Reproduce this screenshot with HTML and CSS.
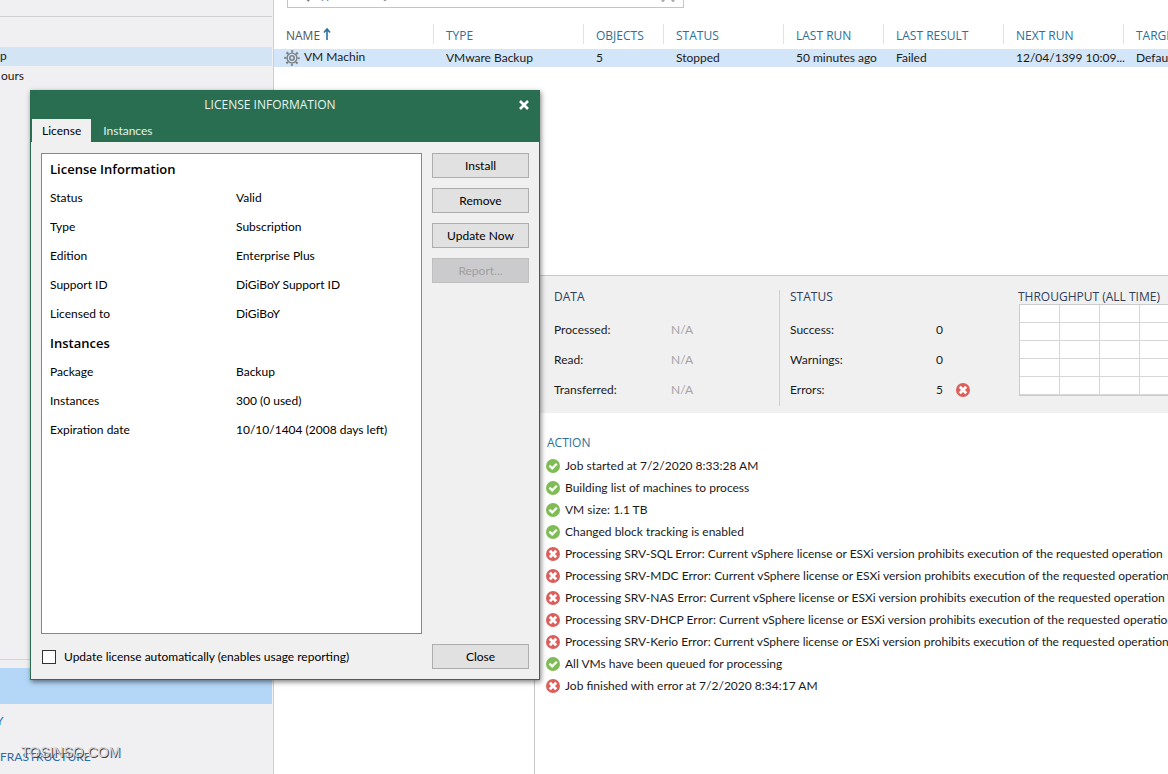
FILE: index.html
```html
<!DOCTYPE html>
<html lang="en">
<head>
    <meta charset="UTF-8">
    <title>License Information</title>
    <link rel="stylesheet" href="styles.css">
</head>
<body>
    <svg class="sprite" aria-hidden="true">
        <symbol id="ok" viewBox="0 0 14 14">
            <circle cx="7" cy="7" r="7" fill="#7fbc55"/>
            <path d="M3.4 6.6 L6.2 9.4 L10.8 4.8" fill="none" stroke="#fff" stroke-width="2.2"/>
        </symbol>
        <symbol id="error" viewBox="0 0 14 14">
            <circle cx="7" cy="7" r="7" fill="#dc5f5c"/>
            <path d="M3.8 3.8 L10.2 10.2 M10.2 3.8 L3.8 10.2" fill="none" stroke="#fff" stroke-width="2.8"/>
        </symbol>
    </svg>

    <div class="app">
        <nav class="sidebar">
            <div class="sidebar-head"></div>
            <ul class="tree">
                <li class="selected"><a href="#">p</a></li>
                <li><a href="#">ours</a></li>
            </ul>
            <ul class="views">
                <li class="selected"><a href="#" aria-label="Home"></a></li>
                <li class="clipped"><a href="#">Y</a></li>
                <li><a href="#">FRASTRUCTURE</a></li>
            </ul>
            <div class="watermark">TOSINSO.COM</div>
        </nav>

        <main class="main">
            <section class="jobs">
                <div class="toolbar">
                    <div class="search">
                        <svg class="search-icon" viewBox="0 0 14 14"><circle cx="5" cy="5" r="4" fill="none" stroke="#777" stroke-width="1.5"/><path d="M8 8 L13 13" stroke="#777" stroke-width="2"/></svg>
                        <input type="text" aria-label="Search" placeholder="Type in an object name to search for">
                        <svg class="search-clear" viewBox="0 0 18 14"><path d="M1 9 L4 13 L7 9 M11 9 L14 13 L17 9" fill="none" stroke="#aaa" stroke-width="2"/></svg>
                    </div>
                </div>
                <table class="job-table">
                    <colgroup>
                        <col class="w-name"><col class="w-type"><col class="w-objects"><col class="w-status"><col class="w-run"><col class="w-result"><col class="w-next"><col class="w-target">
                    </colgroup>
                    <thead>
                        <tr>
                            <th class="sorted">NAME<svg class="sort" viewBox="0 0 8 12"><path d="M4 12 V1 M1 4.5 L4 1 L7 4.5" fill="none" stroke="#2a6f9e" stroke-width="1.6"/></svg></th>
                            <th>TYPE</th>
                            <th>OBJECTS</th>
                            <th>STATUS</th>
                            <th>LAST RUN</th>
                            <th>LAST RESULT</th>
                            <th>NEXT RUN</th>
                            <th>TARGET</th>
                        </tr>
                    </thead>
                    <tbody>
                        <tr>
                            <td class="job-name"><svg class="gear" viewBox="0 0 16 16"><g fill="none" stroke="#7c8287"><circle cx="8" cy="8" r="4.9" stroke-width="1.4"/><circle cx="8" cy="8" r="2.2" stroke-width="1.6"/><circle cx="8" cy="8" r="6.6" stroke-width="2.4" stroke-dasharray="2 3.184" stroke-dashoffset="1"/></g></svg>VM Machin</td>
                            <td>VMware Backup</td>
                            <td>5</td>
                            <td>Stopped</td>
                            <td>50 minutes ago</td>
                            <td>Failed</td>
                            <td>12/04/1399 10:09...</td>
                            <td>Default</td>
                        </tr>
                    </tbody>
                </table>
            </section>

            <section class="details">
                <div class="machines"></div>
                <div class="session">
                    <div class="stats">
                        <div class="stat data">
                            <h3>DATA</h3>
                            <dl>
                                <dt>Processed:</dt><dd>N/A</dd>
                                <dt>Read:</dt><dd>N/A</dd>
                                <dt>Transferred:</dt><dd>N/A</dd>
                            </dl>
                        </div>
                        <div class="stat status">
                            <h3>STATUS</h3>
                            <dl>
                                <dt>Success:</dt><dd>0</dd>
                                <dt>Warnings:</dt><dd>0</dd>
                                <dt>Errors:</dt><dd>5<svg class="icon"><use href="#error"/></svg></dd>
                            </dl>
                        </div>
                        <div class="throughput">
                            <h3>THROUGHPUT (ALL TIME)</h3>
                            <div class="chart"></div>
                        </div>
                    </div>
                    <div class="actions">
                        <h3>ACTION</h3>
                        <ul>
                            <li><svg class="icon"><use href="#ok"/></svg>Job started at 7/2/2020 8:33:28 AM</li>
                            <li><svg class="icon"><use href="#ok"/></svg>Building list of machines to process</li>
                            <li><svg class="icon"><use href="#ok"/></svg>VM size: 1.1 TB</li>
                            <li><svg class="icon"><use href="#ok"/></svg>Changed block tracking is enabled</li>
                            <li><svg class="icon"><use href="#error"/></svg>Processing SRV-SQL Error: Current vSphere license or ESXi version prohibits execution of the requested operation</li>
                            <li><svg class="icon"><use href="#error"/></svg>Processing SRV-MDC Error: Current vSphere license or ESXi version prohibits execution of the requested operation</li>
                            <li><svg class="icon"><use href="#error"/></svg>Processing SRV-NAS Error: Current vSphere license or ESXi version prohibits execution of the requested operation</li>
                            <li><svg class="icon"><use href="#error"/></svg>Processing SRV-DHCP Error: Current vSphere license or ESXi version prohibits execution of the requested operation</li>
                            <li><svg class="icon"><use href="#error"/></svg>Processing SRV-Kerio Error: Current vSphere license or ESXi version prohibits execution of the requested operation</li>
                            <li><svg class="icon"><use href="#ok"/></svg>All VMs have been queued for processing</li>
                            <li><svg class="icon"><use href="#error"/></svg>Job finished with error at 7/2/2020 8:34:17 AM</li>
                        </ul>
                    </div>
                </div>
            </section>
        </main>
    </div>

    <div class="dialog" role="dialog" aria-labelledby="dialog-title">
        <header class="dialog-header">
            <h1 id="dialog-title">LICENSE INFORMATION</h1>
            <button class="close" aria-label="Close window"><svg viewBox="0 0 10 10"><path d="M1 1 L9 9 M9 1 L1 9" stroke="#fff" stroke-width="2.6"/></svg></button>
            <div class="tabs">
                <button class="tab active">License</button>
                <button class="tab">Instances</button>
            </div>
        </header>
        <div class="dialog-body">
            <div class="info">
                <h2>License Information</h2>
                <dl>
                    <dt>Status</dt><dd>Valid</dd>
                    <dt>Type</dt><dd>Subscription</dd>
                    <dt>Edition</dt><dd>Enterprise Plus</dd>
                    <dt>Support ID</dt><dd>DiGiBoY Support ID</dd>
                    <dt>Licensed to</dt><dd>DiGiBoY</dd>
                </dl>
                <h2>Instances</h2>
                <dl>
                    <dt>Package</dt><dd>Backup</dd>
                    <dt>Instances</dt><dd>300 (0 used)</dd>
                    <dt>Expiration date</dt><dd>10/10/1404 (2008 days left)</dd>
                </dl>
            </div>
            <div class="buttons">
                <button class="btn">Install</button>
                <button class="btn">Remove</button>
                <button class="btn">Update Now</button>
                <button class="btn" disabled>Report...</button>
            </div>
        </div>
        <footer class="dialog-footer">
            <label><input type="checkbox"> Update license automatically (enables usage reporting)</label>
            <button class="btn">Close</button>
        </footer>
    </div>
</body>
</html>
```
FILE: styles.css
```css
* {
    box-sizing: border-box;
}
body {
    margin: 0;
    font: 12px/18px Lato, "Open Sans", sans-serif;
    color: #1a1a1a;
    background: #fff;
    overflow: hidden;
}
h1, h2, h3, ul, dl, dd {
    margin: 0;
    padding: 0;
    font-weight: normal;
}
h1, h2, h3, th {
    font-family: "Open Sans", "Noto Sans", sans-serif;
}
h1, h3 {
    font-size: 12px;
}
ul {
    list-style: none;
}
a {
    color: inherit;
    text-decoration: none;
}
button, input {
    font: inherit;
    color: inherit;
}
.sprite {
    display: none;
}
.icon {
    width: 14px;
    height: 14px;
    flex: none;
}

.app {
    display: flex;
    height: 100vh;
}

/* sidebar */
.sidebar {
    position: relative;
    display: flex;
    flex-direction: column;
    flex: 0 0 274px;
    padding-right: 1px;
    background: #f0eff1;
    border-right: 1px solid #cfcfd1;
}
.sidebar-head {
    height: 17px;
    margin-bottom: 30px;
    border-bottom: 1px solid #cfcfd1;
}
.tree {
    flex: 1;
}
.tree li {
    height: 19px;
}
.tree .selected {
    background: #d3e5f5;
}
.tree li + li {
    padding-left: 1px;
    margin-top: 1px;
}
.views {
    padding-top: 8px;
    border-top: 1px solid #d4d3d5;
    color: #2a6cab;
}
.views li {
    height: 36px;
    line-height: 34px;
}
.views li:last-child {
    height: 34px;
}
.views .selected {
    background: #b4d7f8;
}
.views .clipped {
    text-indent: -4px;
}
.watermark {
    position: absolute;
    left: 21px;
    bottom: 13px;
    font: 14px/18px "Liberation Sans", sans-serif;
    color: #d4d4d6;
    text-shadow: 1px 1px 0 #444;
}

/* job list */
.main {
    display: flex;
    flex-direction: column;
    flex: 1;
    min-width: 0;
}
.jobs {
    flex: 0 0 275px;
    overflow: hidden;
}
.toolbar {
    display: flex;
    align-items: flex-end;
    height: 8px;
    margin: 0 0 16px 13px;
    overflow: hidden;
}
.search {
    display: flex;
    align-items: center;
    gap: 4px;
    width: 397px;
    height: 26px;
    padding: 0 6px 0 8px;
    flex: none;
    border: 1px solid #c4c4c4;
}
.search input {
    flex: 1;
    padding: 0;
    border: 0;
    outline: 0;
}
.search-icon {
    width: 14px;
    height: 14px;
}
.search-clear {
    width: 18px;
    height: 14px;
}
.job-table {
    width: 970px;
    table-layout: fixed;
    border-spacing: 0;
}
.w-name { width: 160px; }
.w-type { width: 150px; }
.w-objects { width: 80px; }
.w-status { width: 120px; }
.w-run { width: 100px; }
.w-result { width: 120px; }
.w-next { width: 120px; }
.w-target { width: 120px; }
.job-table th {
    height: 20px;
    padding: 4px 0 0 12px;
    font-weight: normal;
    text-align: left;
    line-height: 16px;
    color: #2b7099;
    border-right: 1px solid #e3e3e3;
}
.job-table th.sorted {
    color: #555;
}
.job-table thead::after {
    content: "";
    display: block;
    height: 5px;
}
.job-table td {
    height: 18px;
    padding: 0 0 1px 12px;
    line-height: 16px;
    background: #d3e5f8;
    white-space: nowrap;
}
.job-table .job-name {
    padding-left: 10px;
}
.sort {
    width: 8px;
    height: 12px;
    margin-left: 3px;
}
.gear {
    width: 16px;
    height: 16px;
    margin-right: 4px;
    vertical-align: middle;
}

/* session details */
.details {
    display: flex;
    flex: 1;
    min-height: 0;
    border-top: 1px solid #c8c8c8;
}
.machines {
    flex: 0 0 260px;
}
.session {
    flex: 1;
    min-width: 0;
    border-left: 1px solid #c8c8c8;
}
.stats {
    display: flex;
    height: 137px;
    padding: 14px 0 7px;
    overflow: hidden;
    background: #f0f0f1;
}
.stats h3 {
    line-height: 14px;
    color: #2e3f5c;
}
.stat dl {
    display: grid;
    grid-template-rows: repeat(3, 30px);
    line-height: 30px;
    padding-top: 11px;
}
.data {
    flex: 0 0 245px;
    padding-left: 19px;
    border-right: 1px solid #cfcfcf;
}
.data dl {
    grid-template-columns: 117px 1fr;
}
.data dd {
    color: #a3a3a3;
}
.status {
    flex: 0 0 238px;
    padding-left: 10px;
}
.status dl {
    grid-template-columns: 146px 1fr;
}
.status dd {
    display: flex;
    align-items: center;
    gap: 13px;
}
.throughput {
    flex: 1;
    min-width: 150px;
    white-space: nowrap;
}
.chart {
    height: 92px;
    margin-left: 1px;
    border: 1px solid #ccc;
    border-right: 0;
    background:
        repeating-linear-gradient(to right, transparent 0 39px, #d6d6d6 39px 40px),
        repeating-linear-gradient(to bottom, #fff 0 17px, #d6d6d6 17px 18px);
}
.actions {
    padding: 21px 0 0 11px;
    overflow: hidden;
    white-space: nowrap;
}
.actions h3 {
    padding-left: 1px;
    margin-bottom: 3px;
    color: #2b7099;
}
.actions li {
    display: flex;
    align-items: center;
    gap: 5px;
    height: 22px;
}

/* dialog */
.dialog {
    position: absolute;
    top: 90px;
    left: 30px;
    width: 510px;
    color: #000;
    background: #f0f0f1;
    border: 1px solid #2a6e52;
    box-shadow: 1px 2px 5px rgba(0, 0, 0, 0.5);
}
.dialog-header {
    display: grid;
    grid-template-columns: 1fr 30px;
    align-items: center;
    color: #fff;
    background: #2a6e52;
}
.dialog-header h1 {
    line-height: 28px;
    text-align: center;
    color: #e6f5ee;
}
.close {
    height: 28px;
    padding: 2px 0 0;
    border: 0;
    background: none;
}
.close svg {
    width: 10px;
    height: 10px;
}
.tabs {
    grid-column: 1 / -1;
    display: flex;
    gap: 2px;
    padding-left: 1px;
}
.tab {
    height: 23px;
    padding: 0 10px;
    border: 0;
    color: #e0f2ea;
    background: none;
}
.tab.active {
    color: #000;
    background: #f0f0f1;
}
.dialog-body {
    display: flex;
    gap: 10px;
    padding: 11px 10px 0;
}
.info {
    flex: 1;
    height: 481px;
    padding: 1px 8px;
    line-height: 29px;
    background: #fff;
    border: 1px solid #828790;
}
.info h2 {
    font-size: 13px;
    font-weight: 600;
    line-height: 28px;
}
.info dl {
    display: grid;
    grid-template-columns: 186px 1fr;
    padding-bottom: 1px;
}
.buttons {
    display: flex;
    flex-direction: column;
    gap: 10px;
}
.btn {
    width: 97px;
    height: 25px;
    padding: 0;
    background: #e1e1e2;
    border: 1px solid #adadad;
}
.btn:disabled {
    color: #a0a0a2;
    background: #cbcbcd;
    border-color: #bfbfbf;
}
.dialog-footer {
    display: flex;
    align-items: center;
    justify-content: space-between;
    padding: 10px;
}
.dialog-footer label {
    display: flex;
    align-items: center;
    gap: 8px;
}
.dialog-footer input {
    appearance: none;
    width: 14px;
    height: 14px;
    margin: 0 0 0 1px;
    background: #fff;
    border: 1px solid #333;
}
.dialog-footer input:checked {
    background: #2a6e52;
}
```
